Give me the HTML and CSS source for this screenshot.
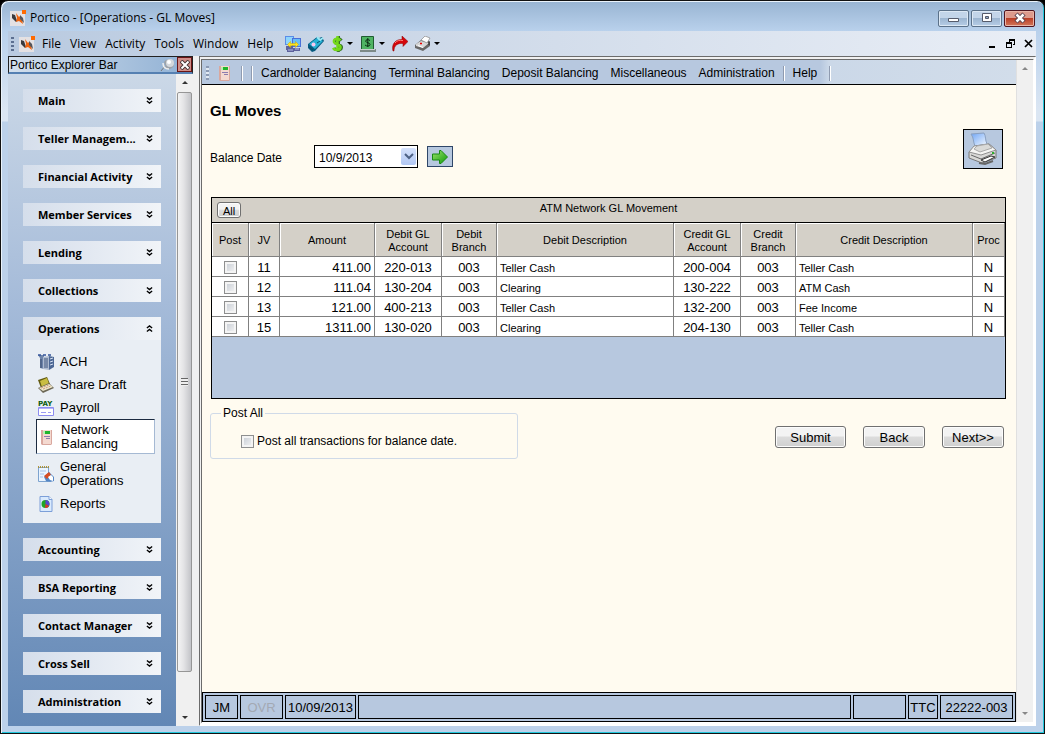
FILE: index.html
```html
<!DOCTYPE html>
<html lang="en">
<head>
    <meta charset="UTF-8">
    <meta name="viewport" content="width=device-width, initial-scale=1.0">
    <title>Portico - [Operations - GL Moves]</title>
    <link rel="stylesheet" href="styles.css">
</head>
<body>
    <svg class="defs" aria-hidden="true">
        <defs>
            <linearGradient id="greenFill" x1="0" y1="0" x2="1" y2="1">
                <stop offset="0" stop-color="#9be36a"/><stop offset="1" stop-color="#0f9a0a"/>
            </linearGradient>
            <linearGradient id="paperFill" x1="0" y1="0" x2="1" y2="1">
                <stop offset="0" stop-color="#6fa5f5"/><stop offset="1" stop-color="#f4f9ff"/>
            </linearGradient>
        </defs>
        <symbol id="logo" viewBox="0 0 16 16">
            <path d="M0 1h15v15H0z" fill="#e4e1e3"/>
            <path d="M2 4l3 1 2 6-1 1-4-4z" fill="#3a3a3e"/>
            <path d="M6 3l3 4 1-1 2 4 1 4-4-3-3 1 1-4z" fill="#f0640f"/>
            <path d="M10 5l3 3 1 5-4-4z" fill="#55555a"/>
            <path d="M12 0h4v4h-4z" fill="#ff6a00"/>
        </symbol>
        <symbol id="terminal" viewBox="0 0 16 16">
            <path d="M2 1h11v14l-1 1H3l-1-1z" fill="#d9a89f"/>
            <path d="M4 1h8v14H4z" fill="#f4d9d0"/>
            <path d="M5 2h6v3H5z" fill="#1fb52c"/><path d="M4 2h2v3H4z" fill="#b9f0b0"/>
            <path d="M5 7.500h6M7 9.500h4" stroke="#8c7cae"/>
        </symbol>
        <symbol id="more" viewBox="0 0 8 9">
            <path d="M1 1l3 2.500 3-2.500M1 5l3 2.500 3-2.500" fill="none" stroke="#000" stroke-width="1.500"/>
        </symbol>
        <symbol id="down" viewBox="0 0 6 3"><path d="M0 0h6L3 3z"/></symbol>
    </svg>

    <div class="window">
        <header class="title-bar">
            <svg class="icon"><use href="#logo"/></svg>
            <h1 class="title">Portico - [Operations - GL Moves]</h1>
            <div class="window-buttons">
                <button class="win-btn" aria-label="Minimize"><svg width="12" height="12" viewBox="0 0 12 12"><path d="M.5 6.500h10v3H.5z" fill="#fff" stroke="#555b6b"/></svg></button>
                <button class="win-btn" aria-label="Maximize"><svg width="12" height="12" viewBox="0 0 12 12"><path d="M1.500 1.500h9v8h-9z" fill="#fff" stroke="#555b6b"/><path d="M4.500 4.500h3v2h-3z" fill="#8fa8c8" stroke="#555b6b"/></svg></button>
                <button class="win-btn close" aria-label="Close"><svg width="12" height="12" viewBox="0 0 12 12"><path d="M2 2l8 8M10 2l-8 8" stroke="#5c4450" stroke-width="4.500"/><path d="M2.500 2.500l7 7M9.500 2.500l-7 7" stroke="#fff" stroke-width="2.500"/></svg></button>
            </div>
        </header>

        <nav class="menu-bar">
            <span class="grip"></span>
            <svg class="icon"><use href="#logo"/></svg>
            <div class="menus">
                <button>File</button>
                <button>View</button>
                <button>Activity</button>
                <button>Tools</button>
                <button>Window</button>
                <button>Help</button>
            </div>
            <div class="tools">
                <button aria-label="Connect">
                    <svg class="icon" viewBox="0 0 16 16"><path d="M0 0h9v9H0z" fill="#5a8de8"/><path d="M1 1h7v7H1z" fill="#8fd5fb"/><path d="M7 2h9v9H7z" fill="#4a70d8"/><path d="M8 3h7v7H8z" fill="#67bdf7"/><path d="M1 10h7v2h7v3H9v1H2v-2H1z" fill="#5d629c"/><path d="M3 14h5M10 13h4" stroke="#b6bce6"/><path d="M2.500 8.500l3-3v2h5v-2l3 3-3 3v-2h-5v2z" fill="#ffe21a" stroke="#c9a400" stroke-width=".5"/></svg>
                </button>
                <button aria-label="Calculator">
                    <svg class="icon" viewBox="0 0 16 16"><path d="M0 8l9-7 2 1 3-1 2 4-9 10-3 1-4-4z" fill="#075b80"/><path d="M1 8l8-6 6 3-8 8z" fill="#27b0d3"/><path d="M9 1l3 3 3-2" fill="none" stroke="#9ce9f5" stroke-width="2"/><circle cx="5.500" cy="8.500" r="2" fill="#f8c6ee"/><path d="M9 7l3-2M1 11l4 3" stroke="#0a4d6c"/></svg>
                </button>
                <button class="split" aria-label="Cash">
                    <svg width="13" height="16" viewBox="0 0 13 16"><path d="M10.500 4.500C8 1.500 3 3 4 6s7 2 6.500 5.500-6 3-7.500.5M7.500 0v16" fill="none" stroke="#346b28" stroke-width="3"/><path d="M9.500 4.500C7 1.500 2 3 3 6s7 2 6.500 5.500-6 3-7.500.5M6.500 0v15" fill="none" stroke="#75d91b" stroke-width="2.500"/></svg>
                    <svg class="arrow"><use href="#down"/></svg>
                </button>
                <button class="split" aria-label="Check">
                    <svg class="icon" viewBox="0 0 16 16"><path d="M0 13h16v3H0z" fill="#7d8a88"/><path d="M1.500.5h12v13h-12z" fill="#4fb463" stroke="#205c31"/><path d="M0 13h15v1H0z" fill="#c9d0cf"/><path d="M10 4.500c-2-1.500-4.500-.8-4.300.8S10 6.500 10 8.500 6.500 10.500 5 9M7.800 2v9" fill="none" stroke="#0a2a12"/></svg>
                    <svg class="arrow"><use href="#down"/></svg>
                </button>
                <button aria-label="Forward">
                    <svg class="icon" viewBox="0 0 16 16"><path d="M1 15C-1 8 4 3 10 3.500V0l6 5.500-5 5V7.500C6 7 2 9 2 15z" fill="#d5060a" stroke="#8b0000" stroke-width=".5"/><path d="M3 7c2-2.500 4-3 8-2.500" fill="none" stroke="#ff7d75"/></svg>
                </button>
                <button class="split" aria-label="Print">
                    <svg class="icon" viewBox="0 0 16 16"><path d="M0 9l6-5 9 2v4l-7 5-8-3z" fill="#676767"/><path d="M1 8l5-3 8 2-6 5-7-2z" fill="#d6d6d6"/><path d="M6 4l4-4 5 2-3 5z" fill="#fff" stroke="#888" stroke-width=".7"/><path d="M3 9.500l5 2" stroke="#fff"/><path d="M5 7.500h2" stroke="#e00" stroke-width="1.500"/><path d="M14 5v4" stroke="#222"/></svg>
                    <svg class="arrow"><use href="#down"/></svg>
                </button>
            </div>
            <div class="mdi-buttons">
                <button aria-label="Minimize child"><svg width="9" height="9" viewBox="0 0 9 9"><path d="M1 7h6v2H1z"/></svg></button>
                <button aria-label="Restore child"><svg width="9" height="9" viewBox="0 0 9 9"><path d="M3 0h6v6H7V5h1V2H4v1H3zM0 3h6v6H0zM1 5v3h4V5z"/></svg></button>
                <button aria-label="Close child"><svg width="9" height="9" viewBox="0 0 9 9"><path d="M1 1l7 7M8 1L1 8" stroke="#000" stroke-width="1.700"/></svg></button>
            </div>
        </nav>

        <div class="workspace">
            <aside class="sidebar">
                <div class="sidebar-head">
                    <span>Portico Explorer Bar</span>
                    <button class="pin" aria-label="Pin"><svg width="15" height="14" viewBox="0 0 15 14"><path d="M1 13l4-5" stroke="#777"/><path d="M4 4c2-4 10-3 10 2s-6 6-8 4z" fill="#9da2a8"/><ellipse cx="10" cy="5" rx="4" ry="4" fill="#d4d8dc"/><ellipse cx="9" cy="4" rx="2" ry="2" fill="#fff"/><path d="M3 5c0 4 2 6 6 6" fill="none" stroke="#eee" stroke-width="1.500"/></svg></button>
                    <button class="bar-close" aria-label="Close bar"><svg width="10" height="10" viewBox="0 0 10 10"><path d="M1 1l8 8M9 1L1 9" stroke="#433" stroke-width="4"/><path d="M1.500 1.500l7 7M8.500 1.500l-7 7" stroke="#fff" stroke-width="2"/></svg></button>
                </div>
                <div class="sidebar-body">
                    <div class="groups">
                        <button class="group"><span>Main</span><svg class="more"><use href="#more"/></svg></button>
                        <button class="group"><span>Teller Managem...</span><svg class="more"><use href="#more"/></svg></button>
                        <button class="group"><span>Financial Activity</span><svg class="more"><use href="#more"/></svg></button>
                        <button class="group"><span>Member Services</span><svg class="more"><use href="#more"/></svg></button>
                        <button class="group"><span>Lending</span><svg class="more"><use href="#more"/></svg></button>
                        <button class="group"><span>Collections</span><svg class="more"><use href="#more"/></svg></button>
                        <div class="open-group">
                            <button class="group"><span>Operations</span><svg class="more less"><use href="#more"/></svg></button>
                            <div class="links">
                                <a href="#ach">
                                    <svg class="icon" viewBox="0 0 16 16"><path d="M0 1h6v14l-4-1V4z" fill="#6e84aa"/><path d="M5 3l6-1v14l-6-1z" fill="#aebbd0"/><path d="M11 2l5 1v10l-5 3z" fill="#4d6895"/><path d="M6 5h4M6 7h4M6 9h4M6 11h4M6 13h4" stroke="#41577e"/><path d="M12 5l3-1M12 8l3-1M12 11l3-1" stroke="#d8e2f3"/><path d="M0 1h3M5 1h3M10 1h3" stroke="#33549a" stroke-width="1.500"/><path d="M3 5v9" stroke="#364a6d"/></svg>
                                    <span>ACH</span>
                                </a>
                                <a href="#share-draft">
                                    <svg class="icon" viewBox="0 0 16 16"><path d="M0 3l9-3 3 7-9 4z" fill="#625a10"/><path d="M2 4l7-3 2 6-7 3z" fill="#c9bd42"/><path d="M0 11l11-5 5 5-11 5z" fill="#6c6755"/><path d="M1 11l10-4 4 3-10 4z" fill="#eee9cd"/><path d="M3 11l8-3M5 12l8-3" stroke="#d09a78" stroke-dasharray="2 1"/></svg>
                                    <span>Share Draft</span>
                                </a>
                                <a href="#payroll">
                                    <svg class="icon" viewBox="0 0 16 16"><text x="0" y="6" class="pay-text">PAY</text><path d="M.5 7.500h15v8H.5z" fill="#fff" stroke="#8c8cf0"/><path d="M1 8h14v1H1z" fill="#b3b3fa"/><path d="M3 12.500h5M10 12.500h3" stroke="#9a9af5"/></svg>
                                    <span>Payroll</span>
                                </a>
                                <a href="#network" class="current">
                                    <svg class="icon"><use href="#terminal"/></svg>
                                    <span>Network Balancing</span>
                                </a>
                                <a href="#general" class="two-lines">
                                    <svg class="icon" viewBox="0 0 16 16"><path d="M.5 1.500h10v14H.5z" fill="#eaf4ff" stroke="#7da3cf"/><path d="M0 1h11" stroke="#b09438" stroke-width="2" stroke-dasharray="1 1"/><path d="M2 5h6M2 8h4M2 11h3" stroke="#a5c3e5"/><path d="M6 11l5-5 5 5v4l-4 1-4-1z" fill="#5587c5"/><path d="M6 10l5-4 2 3-4 4z" fill="#d74d22"/><path d="M10 11l3-2 2 2v4l-3-1z" fill="#fff"/></svg>
                                    <span>General Operations</span>
                                </a>
                                <a href="#reports">
                                    <svg class="icon" viewBox="0 0 16 16"><path d="M2 .5h9l3 3v12H2z" fill="#d9eafd" stroke="#7c9fd8"/><path d="M11 .5v3h3" fill="#fff" stroke="#7c9fd8"/><circle cx="7.500" cy="8" r="4" fill="#1ea427"/><path d="M7.500 8V4a4 4 0 0 1 3.500 6z" fill="#5a43d0"/><path d="M7.500 8l3.500 2a4 4 0 0 1-4 2z" fill="#dc3030"/></svg>
                                    <span>Reports</span>
                                </a>
                            </div>
                        </div>
                        <button class="group"><span>Accounting</span><svg class="more"><use href="#more"/></svg></button>
                        <button class="group"><span>BSA Reporting</span><svg class="more"><use href="#more"/></svg></button>
                        <button class="group"><span>Contact Manager</span><svg class="more"><use href="#more"/></svg></button>
                        <button class="group"><span>Cross Sell</span><svg class="more"><use href="#more"/></svg></button>
                        <button class="group"><span>Administration</span><svg class="more"><use href="#more"/></svg></button>
                    </div>
                    <div class="scrollbar">
                        <svg class="arrow up"><use href="#down"/></svg>
                        <div class="track"><div class="thumb"></div></div>
                        <svg class="arrow"><use href="#down"/></svg>
                    </div>
                </div>
            </aside>

            <div class="mdi">
                <main class="child">
                    <nav class="child-menu">
                        <span class="grip light"></span>
                        <svg class="icon"><use href="#terminal"/></svg>
                        <span class="sep"></span>
                        <span class="sep"></span>
                        <div class="child-links">
                            <button>Cardholder Balancing</button>
                            <button>Terminal Balancing</button>
                            <button>Deposit Balancing</button>
                            <button>Miscellaneous</button>
                            <button>Administration</button>
                        </div>
                        <span class="sep"></span>
                        <button>Help</button>
                        <span class="sep last"></span>
                    </nav>

                    <form class="form">
                        <div class="form-top">
                            <div>
                                <h2>GL Moves</h2>
                                <div class="date-row">
                                    <label for="balanceDate">Balance Date</label>
                                    <div class="combo">
                                        <select id="balanceDate"><option>10/9/2013</option></select>
                                        <svg class="combo-arrow" viewBox="0 0 15 17"><path d="M4 6l4 4 4-4" fill="none" stroke="#4d6185" stroke-width="2"/></svg>
                                    </div>
                                    <button type="button" class="go" aria-label="Go"><svg width="16" height="14" viewBox="0 0 16 14"><path d="M.5 4h7V.5l1.500 0L15.500 7 9 13.500H7.500V10h-7z" fill="url(#greenFill)" stroke="#188a12"/></svg></button>
                                </div>
                            </div>
                            <button type="button" class="print" aria-label="Print">
                                <svg width="30" height="34" viewBox="0 0 30 34"><path d="M3 2l13-1c2 3 1 7 3 11L7 14C5 10 6 6 3 2z" fill="url(#paperFill)" stroke="#8aa0c0"/><path d="M1 20l5-5 15-3 7 6v8l-14 5-13-5z" fill="#d9d9d7" stroke="#777"/><path d="M1 20l5-6 15-2 7 6-15 5z" fill="#f5f5f3" stroke="#909090"/><path d="M6 17l3-3 11-2 4 4-12 4z" fill="#dadad8" stroke="#aaa"/><path d="M3 23l10 4 14-6" fill="none" stroke="#666"/><path d="M13 28l10-4 4 1-10 5z" fill="#fff" stroke="#333"/><path d="M25 20v2" stroke="#2eb02e" stroke-width="2"/><path d="M11 31l6 1 8-3" fill="none" stroke="#666" stroke-width="2"/></svg>
                            </button>
                        </div>

                        <section class="grid">
                            <div class="grid-title">
                                <button type="button" class="all">All</button>
                                <span id="gridTitle">ATM Network GL Movement</span>
                            </div>
                            <table aria-labelledby="gridTitle">
                                <colgroup>
                                    <col class="c-post"><col class="c-jv"><col class="c-amount">
                                    <col class="c-account"><col class="c-branch"><col>
                                    <col class="c-account"><col class="c-branch"><col><col class="c-proc">
                                </colgroup>
                                <thead>
                                    <tr>
                                        <th>Post</th><th>JV</th><th>Amount</th><th>Debit GL Account</th><th>Debit Branch</th>
                                        <th>Debit Description</th><th>Credit GL Account</th><th>Credit Branch</th><th>Credit Description</th><th>Proc</th>
                                    </tr>
                                </thead>
                                <tbody>
                                    <tr>
                                        <td><input type="checkbox" aria-label="Post 11"></td><td>11</td><td class="num">411.00</td><td>220-013</td><td>003</td>
                                        <td class="desc">Teller Cash</td><td>200-004</td><td>003</td><td class="desc">Teller Cash</td><td>N</td>
                                    </tr>
                                    <tr>
                                        <td><input type="checkbox" aria-label="Post 12"></td><td>12</td><td class="num">111.04</td><td>130-204</td><td>003</td>
                                        <td class="desc">Clearing</td><td>130-222</td><td>003</td><td class="desc">ATM Cash</td><td>N</td>
                                    </tr>
                                    <tr>
                                        <td><input type="checkbox" aria-label="Post 13"></td><td>13</td><td class="num">121.00</td><td>400-213</td><td>003</td>
                                        <td class="desc">Teller Cash</td><td>132-200</td><td>003</td><td class="desc">Fee Income</td><td>N</td>
                                    </tr>
                                    <tr>
                                        <td><input type="checkbox" aria-label="Post 15"></td><td>15</td><td class="num">1311.00</td><td>130-020</td><td>003</td>
                                        <td class="desc">Clearing</td><td>204-130</td><td>003</td><td class="desc">Teller Cash</td><td>N</td>
                                    </tr>
                                </tbody>
                            </table>
                        </section>

                        <div class="form-bottom">
                            <fieldset>
                                <legend>Post All</legend>
                                <label class="check"><input type="checkbox"> Post all transactions for balance date.</label>
                            </fieldset>
                            <div class="actions">
                                <button type="button" class="btn wide">Submit</button>
                                <button type="button" class="btn">Back</button>
                                <button type="button" class="btn">Next&gt;&gt;</button>
                            </div>
                        </div>
                    </form>

                    <footer class="status-bar">
                        <span class="s-user">JM</span>
                        <span class="s-ovr">OVR</span>
                        <span class="s-date">10/09/2013</span>
                        <span class="s-message"></span>
                        <span class="s-blank"></span>
                        <span class="s-code">TTC</span>
                        <span class="s-id">22222-003</span>
                    </footer>
                </main>
                <div class="scrollbar inactive">
                    <svg class="arrow up"><use href="#down"/></svg>
                    <svg class="arrow"><use href="#down"/></svg>
                </div>
            </div>
        </div>
    </div>
</body>
</html>
```
FILE: styles.css
```css
* {
    box-sizing: border-box;
}

body {
    margin: 0;
    height: 100vh;
    background: #000;
    color: #000;
    font-family: "Liberation Sans", Arial, sans-serif;
    font-size: 13px;
    line-height: 14px;
}

button {
    font: inherit;
    color: inherit;
    background: none;
    border: none;
    padding: 0;
}

svg {
    display: block;
    flex: none;
}

.defs {
    position: absolute;
    width: 0;
    height: 0;
}

.icon {
    width: 16px;
    height: 16px;
}

.arrow {
    width: 6px;
    height: 3px;
}

/* Window frame */
.window {
    height: 100%;
    display: flex;
    flex-direction: column;
    padding: 0 8px 7px 7px;
    border: 1px solid #111;
    border-radius: 8px 8px 0 0;
    background: linear-gradient(#98b4d2, #b9d1ec 30px, #dbe6f3 110px, #dbe6f3 120px, #bcd1ea 121px);
    box-shadow: inset 1px 1px #eaf3fb, inset -1px -1px #21c7dc;
}

.title-bar {
    display: flex;
    align-items: center;
    height: 30px;
    padding: 4px 1px 0 2px;
    font-family: "Open Sans", "Segoe UI", sans-serif;
}

.title {
    flex: 1;
    margin: 0 0 0 4px;
    font-size: 12px;
    font-weight: normal;
}

.window-buttons {
    display: flex;
    gap: 2px;
}

.win-btn {
    display: flex;
    align-items: center;
    justify-content: center;
    width: 31px;
    height: 17px;
    border: 1px solid #5b7189;
    border-radius: 2px;
    background: linear-gradient(#c3d5e9 45%, #9db6d1 50%, #b6cde6);
    box-shadow: inset 0 0 0 1px #dce8f4;
}

.win-btn.close {
    border-color: #501520;
    background: linear-gradient(#dd9a8c 45%, #bb3f27 50%, #d2775a);
    box-shadow: inset 0 0 0 1px #e9b5a8;
}

.menu-bar {
    display: flex;
    align-items: center;
    height: 25px;
    padding: 0 3px;
    background: linear-gradient(90deg, #b9cae0, #cfdae9 45%, #e9eef6);
    font-family: "Open Sans", "Segoe UI", sans-serif;
    font-size: 12px;
}

.grip {
    width: 3px;
    height: 14px;
    margin-right: 5px;
    background: repeating-linear-gradient(#5c6f90 0 2px, transparent 2px 4px);
}

.grip.light {
    background: repeating-linear-gradient(#8b9ab4 0 2px, #e0e8f2 2px 4px);
}

.menus {
    display: flex;
    gap: 9px;
    margin-left: 7px;
}

.tools {
    display: flex;
    gap: 7px;
    margin-left: 12px;
}

.split {
    display: flex;
    align-items: center;
    gap: 3px;
}

.mdi-buttons {
    display: flex;
    gap: 9px;
    margin-left: auto;
}

.workspace {
    flex: 1;
    display: flex;
    min-height: 0;
    background: #f0f0f0;
}

/* Explorer bar */
.sidebar {
    width: 185px;
    flex: none;
    display: flex;
    flex-direction: column;
}

.sidebar-head {
    display: flex;
    align-items: center;
    height: 18px;
    padding-left: 1px;
    border: 1px solid #222;
    border-bottom: 2px solid #5580b2;
    background: linear-gradient(90deg, #d3dfec, #8fb0d4);
    font-size: 12px;
}

.pin {
    margin-left: auto;
}

.bar-close {
    display: flex;
    align-items: center;
    justify-content: center;
    width: 15px;
    height: 15px;
    margin-left: 2px;
    border: 1px solid #6a1414;
    background: #cf8d87;
}

.sidebar-body {
    flex: 1;
    display: flex;
    min-height: 0;
}

.groups {
    flex: 1;
    display: flex;
    flex-direction: column;
    gap: 15px;
    overflow: hidden;
    padding: 15px 15px 0;
    background: linear-gradient(#cbd8e7, #a5bbd9 35%, #6287b5);
}

.group {
    display: flex;
    flex: none;
    align-items: center;
    justify-content: space-between;
    width: 100%;
    height: 23px;
    padding: 0 8px 0 15px;
    background: linear-gradient(90deg, #d5deeb, #f1f4f8);
    font-family: "Open Sans", Tahoma, sans-serif;
    font-size: 11px;
    font-weight: bold;
    white-space: nowrap;
}

.more {
    width: 7px;
    height: 9px;
}

.less {
    transform: rotate(180deg);
}

.open-group {
    background: #e9eef4;
}

.links {
    display: flex;
    flex-direction: column;
    padding: 10px 6px 9px 13px;
}

.links a {
    display: flex;
    align-items: center;
    gap: 6px;
    height: 23px;
    padding: 0 4px 0 2px;
    color: #000;
    text-decoration: none;
}

.links .two-lines {
    height: 39px;
}

.links .current {
    height: 35px;
    border: 1px solid #a5b9d3;
    border-top-color: #1b2a40;
    border-left-color: #1b2a40;
    background: #fff;
}

.links a:last-child {
    height: 21px;
}

.pay-text {
    font: bold 7px "DejaVu Sans", sans-serif;
    fill: #0b5c12;
}

.scrollbar {
    width: 17px;
    display: flex;
    flex-direction: column;
    align-items: center;
    justify-content: space-between;
    padding: 7px 0;
    background: #f0f0f0;
    fill: #333;
}

.scrollbar.inactive {
    border-left: 1px solid #e0e0e0;
    fill: #888;
}

.up {
    transform: rotate(180deg);
}

.track {
    flex: 1;
    width: 15px;
    padding: 8px 0 44px;
}

.thumb {
    height: 100%;
    border: 1px solid #969696;
    border-radius: 2px;
    background:
        repeating-linear-gradient(#666 0 1px, #eee 1px 3px) center / 7px 8px no-repeat,
        linear-gradient(90deg, #f4f4f4, #e3e3e5 45%, #c3c4c8);
}

/* Child window */
.mdi {
    flex: 1;
    display: flex;
    min-width: 0;
    margin-left: 6px;
    border: 3px solid #fff;
    border-top: 4px double #6b6b6b;
    border-left: 3px double #6b6b6b;
    border-bottom-width: 4px;
}

.child {
    flex: 1;
    display: flex;
    flex-direction: column;
    min-width: 0;
    background: #fffbf0;
}

.child-menu {
    display: flex;
    align-items: center;
    gap: 8px;
    height: 25px;
    padding: 2px 0 0 4px;
    border-bottom: 1px solid #000;
    background: linear-gradient(90deg, #b7c8df 76%, #cbd8e8 77%, #d2ddea);
    font-size: 12px;
}

.child-menu .grip {
    margin-right: 0;
}

.child-links {
    display: flex;
    gap: 12px;
}

.sep {
    width: 2px;
    height: 15px;
    border-left: 1px solid #8f9bb0;
    border-right: 1px solid #fff;
}

.sep.last {
    margin-left: 4px;
}

.form {
    flex: 1;
    padding: 17px 10px 0 8px;
}

.form-top {
    display: flex;
    justify-content: space-between;
    padding-right: 3px;
}

h2 {
    margin: 0;
    font-size: 15px;
    line-height: 17px;
}

.date-row {
    display: flex;
    align-items: center;
    height: 23px;
    margin-top: 26px;
}

.date-row label {
    width: 104px;
    padding-top: 2px;
    font-size: 12px;
}

.combo {
    position: relative;
}

select {
    display: block;
    appearance: none;
    width: 104px;
    height: 23px;
    padding: 2px 4px 0;
    border: 1px solid #000;
    border-radius: 0;
    background: #fff;
    color: #000;
    font: 12px "Liberation Sans", Arial, sans-serif;
}

.combo-arrow {
    position: absolute;
    top: 3px;
    right: 2px;
    width: 15px;
    height: 17px;
    border-radius: 2px;
    background: linear-gradient(#d5e1fb, #b2c8f3);
    pointer-events: none;
}

.go {
    display: flex;
    align-items: center;
    justify-content: center;
    width: 26px;
    height: 21px;
    margin-left: 9px;
    border: 1px solid #2f4668;
    background: #b7c8df;
}

.print {
    display: flex;
    align-items: center;
    justify-content: center;
    width: 40px;
    height: 40px;
    margin-top: 27px;
    border: 1px solid #000;
    background: #b7c8df;
}

/* Movement table */
.grid {
    min-height: 202px;
    margin: 28px 0 0 1px;
    border: 1px solid #000;
    background: #b7c8df;
    font-size: 11px;
}

.grid-title {
    display: grid;
    grid-template-columns: 1fr auto 1fr;
    align-items: center;
    height: 25px;
    padding: 0 5px;
    border-bottom: 1px solid #000;
    background: #d4d0c8;
}

#gridTitle {
    padding-bottom: 4px;
}

.all,
.btn {
    border: 1px solid #707070;
    border-radius: 3px;
    background: linear-gradient(#f3f3f3 45%, #dcdcdc 50%, #cfcfcf);
    box-shadow: inset 0 0 0 1px #fcfcfc;
}

.all {
    width: 24px;
    height: 16px;
    padding-top: 1px;
}

table {
    width: 100%;
    table-layout: fixed;
    border-collapse: separate;
    border-spacing: 0;
}

.c-post { width: 37px; }
.c-jv { width: 31px; }
.c-amount { width: 95px; }
.c-account { width: 67px; }
.c-branch { width: 55px; }
.c-proc { width: 32px; }

th,
td {
    padding: 0;
    border-right: 1px solid #808080;
    border-bottom: 1px solid #808080;
    text-align: center;
}

th {
    height: 34px;
    padding: 2px 8px 0;
    background: #d4d0c8;
    box-shadow: inset 1px 1px #fff;
    font-weight: normal;
    line-height: 13px;
}

th:first-child,
th:last-child {
    padding: 2px 0 0;
}

td {
    height: 20px;
    padding-top: 3px;
    background: #fff;
    font-size: 13px;
    line-height: 16px;
}

td:first-child {
    padding-top: 2px;
}

.num {
    padding-right: 3px;
    text-align: right;
}

.desc {
    padding-left: 3px;
    font-size: 11px;
    text-align: left;
}

input[type="checkbox"] {
    appearance: none;
    display: block;
    flex: none;
    width: 13px;
    height: 13px;
    margin: 0;
    border: 1px solid #8e8f8f;
    background: linear-gradient(135deg, #c4cad2, #f6f6f6);
    box-shadow: inset 0 0 0 2px #f4f4f4;
}

input[type="checkbox"]:checked {
    background: #3a5a92;
}

td input[type="checkbox"] {
    margin: 0 auto;
}

.form-bottom {
    display: flex;
    justify-content: space-between;
    padding: 7px 2px 0 0;
}

fieldset {
    width: 308px;
    height: 53px;
    margin: 0;
    padding: 14px 0 0 30px;
    border: 1px solid #d0dae8;
    border-radius: 3px;
    font-size: 12px;
}

legend {
    margin-left: -20px;
    padding: 0 2px;
}

.check {
    display: flex;
    align-items: center;
    gap: 3px;
}

.actions {
    display: flex;
    align-items: flex-start;
    gap: 17px;
    padding-top: 20px;
}

.btn {
    width: 62px;
    height: 22px;
    padding-top: 2px;
}

.btn.wide {
    width: 71px;
}

.status-bar {
    display: flex;
    gap: 2px;
    height: 30px;
    padding: 2px;
    border: 1px solid #000;
    background: #b7c8df;
}

.status-bar span {
    display: flex;
    align-items: center;
    justify-content: center;
    padding-top: 2px;
    border: 1px solid #000;
}

.s-user { width: 33px; }
.s-ovr { width: 43px; color: #a3a9b3; }
.s-date { width: 71px; }
.s-message { flex: 1; }
.s-blank { width: 53px; }
.s-code { width: 30px; }
.s-id { width: 73px; }
```
